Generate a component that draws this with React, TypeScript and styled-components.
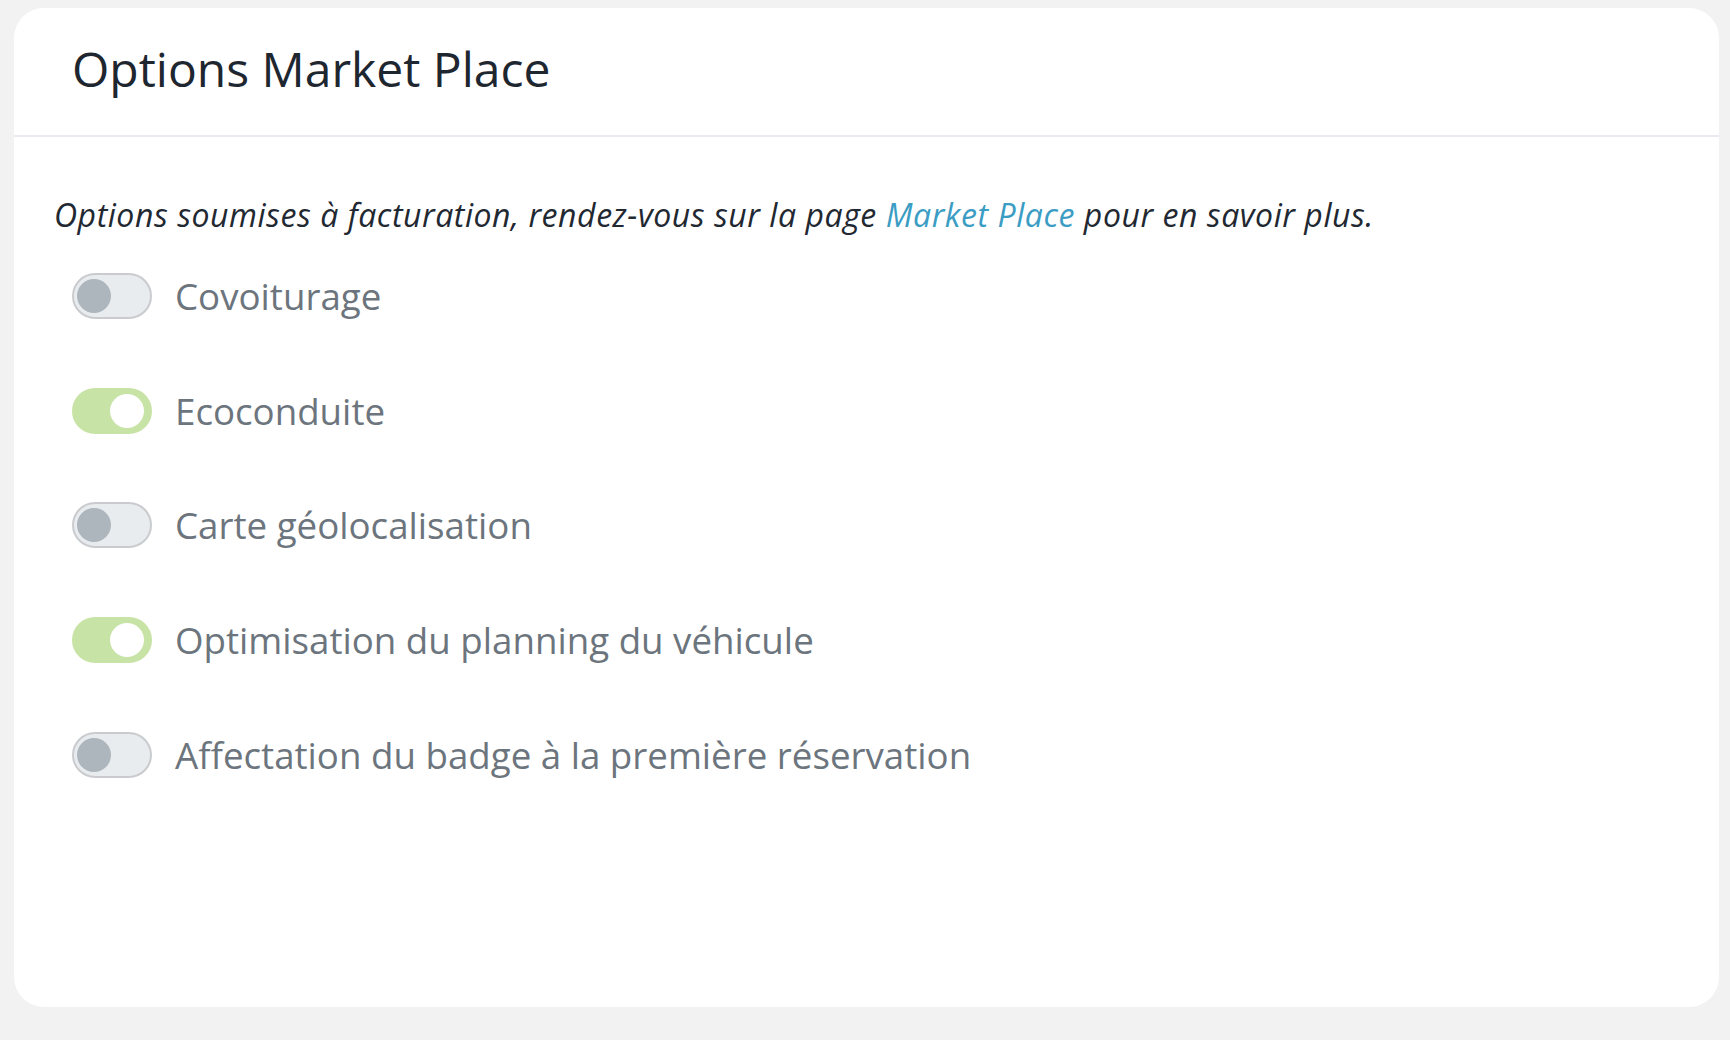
import * as React from 'react'
import styled, { createGlobalStyle } from 'styled-components'

const GlobalStyle = createGlobalStyle`
  html, body {
    margin: 0;
    padding: 0;
    background: #f2f2f2;
    font-family: "Open Sans", "Noto Sans", sans-serif;
  }
`

const Page = styled.div`
  padding: 8px 11px 33px 14px;
  height: 1040px;
  box-sizing: border-box;
`

const Card = styled.section`
  background: #ffffff;
  border-radius: 30px;
  height: 100%;
  display: flex;
  flex-direction: column;
  overflow: hidden;
`

const CardHeader = styled.header`
  height: 129px;
  box-sizing: border-box;
  display: flex;
  align-items: center;
  padding: 0 0 7px 58px;
  border-bottom: 2px solid #e8ebef;
`

const Title = styled.h1`
  margin: 0;
  font-size: 48px;
  font-weight: 400;
  color: #1e2630;
`

const CardBody = styled.div`
  padding: 58px 40px 0;
`

const Notice = styled.p`
  margin: 0 0 38px;
  font-size: 32px;
  line-height: 40px;
  font-style: italic;
  color: #222831;
  letter-spacing: 0.55px;
`

const Link = styled.a`
  color: #3b9cc4;
  text-decoration: none;
`

const OptionList = styled.ul`
  list-style: none;
  margin: 0;
  padding: 0 0 0 18px;
  display: flex;
  flex-direction: column;
  gap: 68.7px;
`

const OptionRow = styled.li`
  display: flex;
  align-items: center;
  gap: 23px;
  height: 46px;
`

const Track = styled.span<{ $on: boolean }>`
  position: relative;
  width: 80px;
  height: 46px;
  box-sizing: border-box;
  border-radius: 23px;
  flex-shrink: 0;
  background: ${p => (p.$on ? '#c8e3a6' : '#e9ecef')};
  border: 2px solid ${p => (p.$on ? '#c8e3a6' : '#c9cbce')};
`

const Knob = styled.span<{ $on: boolean }>`
  position: absolute;
  top: 4px;
  left: ${p => (p.$on ? '36px' : '3px')};
  width: 34px;
  height: 34px;
  border-radius: 50%;
  background: ${p => (p.$on ? '#ffffff' : '#adb5bd')};
`

const Label = styled.span`
  font-size: 36.7px;
  color: #6c757d;
  line-height: 46px;
`

const options = [
  { label: 'Covoiturage', on: false },
  { label: 'Ecoconduite', on: true },
  { label: 'Carte géolocalisation', on: false },
  { label: 'Optimisation du planning du véhicule', on: true },
  { label: 'Affectation du badge à la première réservation', on: false },
]

const Switch: React.FC<{ on: boolean }> = ({ on }) => (
  <Track $on={on} role="switch" aria-checked={on}>
    <Knob $on={on} />
  </Track>
)

export default function App() {
  return (
    <Page>
      <GlobalStyle />
      <Card>
        <CardHeader>
          <Title>Options Market Place</Title>
        </CardHeader>
        <CardBody>
          <Notice>
            Options soumises à facturation, rendez-vous sur la page <Link href="#">Market Place</Link> pour en savoir plus.
          </Notice>
          <OptionList>
            {options.map(o => (
              <OptionRow key={o.label}>
                <Switch on={o.on} />
                <Label>{o.label}</Label>
              </OptionRow>
            ))}
          </OptionList>
        </CardBody>
      </Card>
    </Page>
  )
}
